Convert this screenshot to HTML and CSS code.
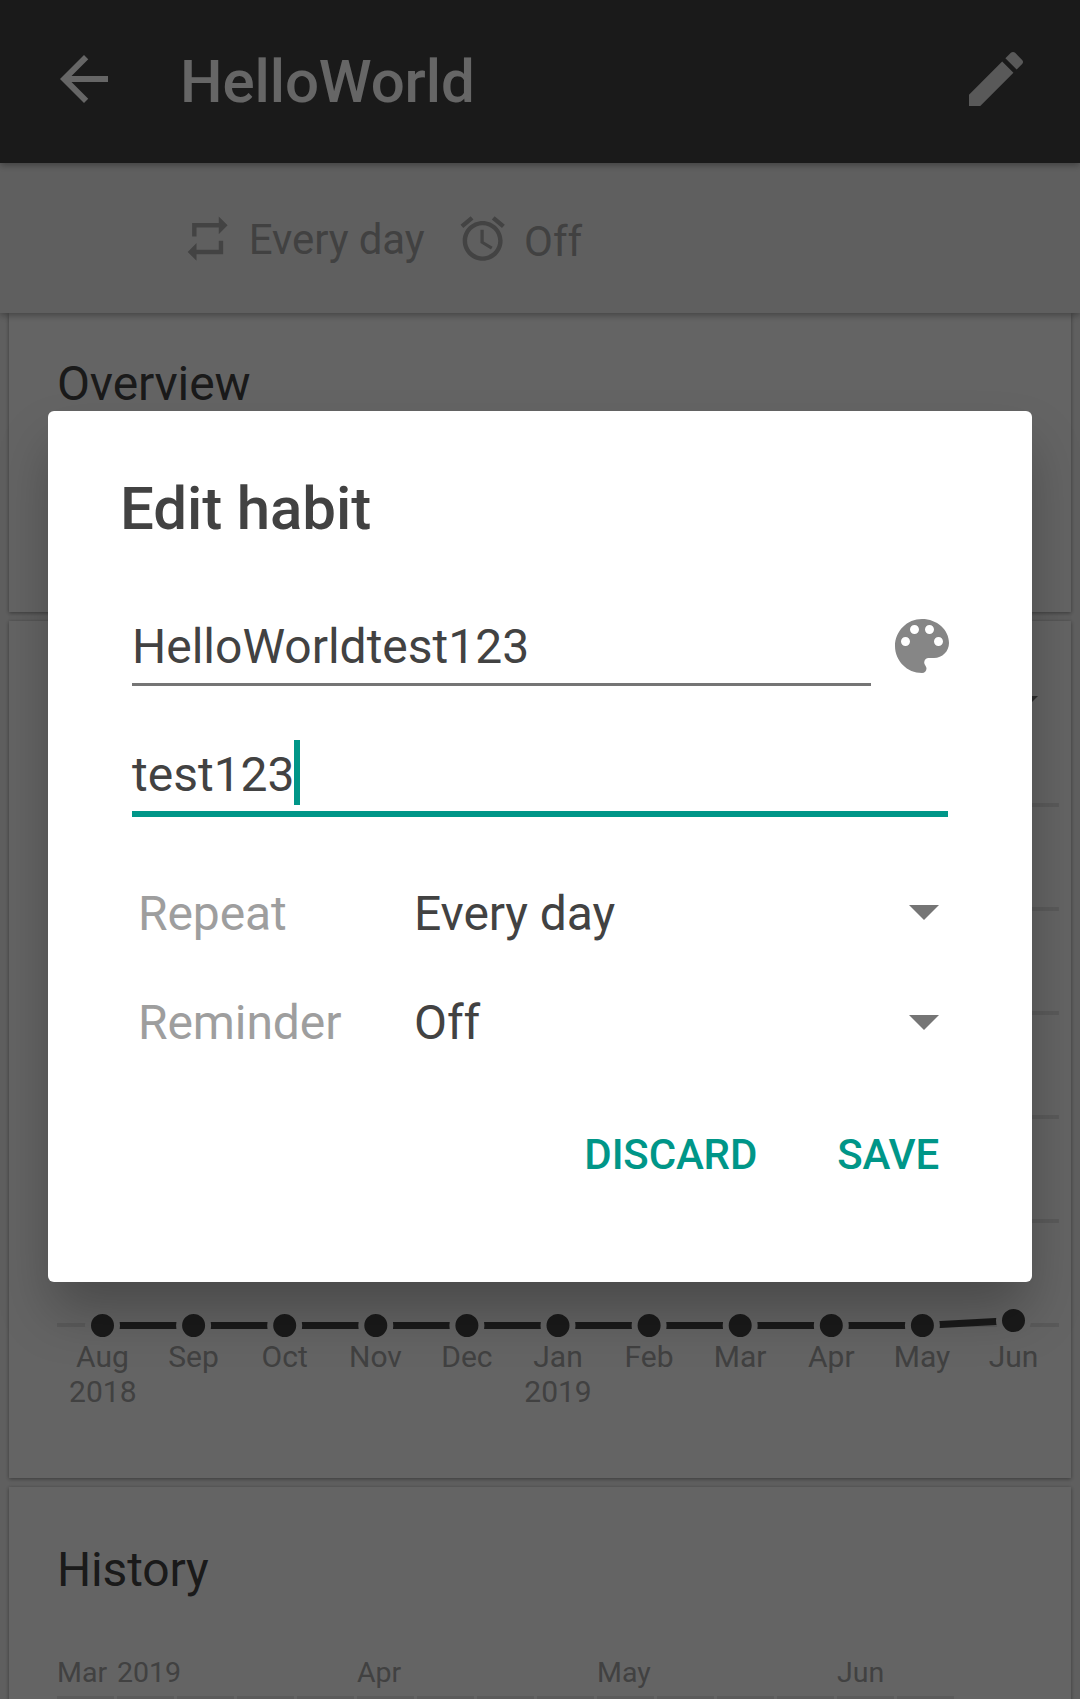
FILE: index.html
```html
<!DOCTYPE html>
<html lang="en">
<head>
<meta charset="utf-8">
<title>HelloWorld</title>
<link rel="stylesheet" href="styles.css">
</head>
<body>
<div class="screen">
  <header class="appbar">
    <svg class="icon back" viewBox="0 0 24 24"><path d="M20 11H7.83l5.59-5.59L12 4l-8 8 8 8 1.41-1.41L7.83 13H20v-2z"/></svg>
    <h1 class="appbar-title">HelloWorld</h1>
    <svg class="icon edit" viewBox="0 0 24 24"><path d="M3 17.25V21h3.75L17.81 9.94l-3.75-3.75L3 17.25zM20.71 7.04c.39-.39.39-1.02 0-1.41l-2.34-2.34c-.39-.39-1.02-.39-1.41 0l-1.83 1.83 3.75 3.75 1.83-1.83z"/></svg>
  </header>
  <div class="subheader">
    <svg class="small-icon" viewBox="0 0 24 24"><path d="M7 7h10v3l4-4-4-4v3H5v6h2V7zm10 10H7v-3l-4 4 4 4v-3h12v-6h-2v4z"/></svg>
    <span class="sub-repeat">Every day</span>
    <svg class="small-icon" viewBox="0 0 24 24"><path d="M22 5.72l-4.6-3.86-1.29 1.53 4.6 3.86L22 5.72zM7.88 3.39L6.6 1.86 2 5.71l1.29 1.53 4.59-3.85zM12.5 8H11v6l4.75 2.85.75-1.23-4-2.37V8zM12 4c-4.97 0-9 4.03-9 9s4.02 9 9 9c4.97 0 9-4.03 9-9s-4.03-9-9-9zm0 16c-3.87 0-7-3.13-7-7s3.13-7 7-7 7 3.13 7 7-3.13 7-7 7z"/></svg>
    <span class="sub-off">Off</span>
  </div>
  <main class="cards">
    <section class="card overview"><h2>Overview</h2></section>
    <section class="card score">
      <svg class="chart" viewBox="9 621 1062 857">
        <path class="spinner" d="M1008 696h30l-15 15z"/>
        <path class="grid" d="M57 805H1059M57 909H1059M57 1013H1059M57 1117H1059M57 1221H1059M57 1325H1059"/>
        <path class="line" d="M102.5 1325.5H922.4L1013.5 1320.5"/>
        <g class="dots">
          <circle cx="102.5" cy="1325.5" r="14.5"/><circle cx="193.6" cy="1325.5" r="14.5"/><circle cx="284.7" cy="1325.5" r="14.5"/><circle cx="375.8" cy="1325.5" r="14.5"/><circle cx="466.9" cy="1325.5" r="14.5"/><circle cx="558" cy="1325.5" r="14.5"/><circle cx="649.1" cy="1325.5" r="14.5"/><circle cx="740.2" cy="1325.5" r="14.5"/><circle cx="831.3" cy="1325.5" r="14.5"/><circle cx="922.4" cy="1325.5" r="14.5"/><circle cx="1013.5" cy="1320.5" r="14.5"/>
        </g>
        <g class="months">
          <text x="102.5" y="1367">Aug</text><text x="193.6" y="1367">Sep</text><text x="284.7" y="1367">Oct</text><text x="375.4" y="1367">Nov</text><text x="466.9" y="1367">Dec</text><text x="558" y="1367">Jan</text><text x="649.1" y="1367">Feb</text><text x="740.2" y="1367">Mar</text><text x="831.3" y="1367">Apr</text><text x="922" y="1367">May</text><text x="1013.5" y="1367">Jun</text>
          <text x="102.8" y="1402">2018</text><text x="558" y="1402">2019</text>
        </g>
      </svg>
    </section>
    <section class="card history">
      <h2>History</h2>
      <div class="weeks">
        <span>Mar</span><span>2019</span><span></span><span></span><span></span><span>Apr</span><span></span><span></span><span></span><span>May</span><span></span><span></span><span></span><span>Jun</span><span></span>
        <i></i><i></i><i></i><i></i><i></i><i></i><i></i><i></i><i></i><i></i><i></i><i></i><i></i><i></i><i></i>
      </div>
    </section>
  </main>
  <div class="scrim">
    <div class="dialog">
      <h2 class="dialog-title">Edit habit</h2>
      <div class="name-row">
        <div class="field name">HelloWorldtest123</div>
        <svg class="palette" viewBox="0 0 24 24"><path d="M12 3c-4.97 0-9 4.03-9 9s4.03 9 9 9c.83 0 1.5-.67 1.5-1.5 0-.39-.15-.74-.39-1.01-.23-.26-.38-.61-.38-.99 0-.83.67-1.5 1.5-1.5H16c2.76 0 5-2.24 5-5 0-4.42-4.03-8-9-8zm-5.5 9c-.83 0-1.5-.67-1.5-1.5S5.67 9 6.5 9 8 9.67 8 10.5 7.33 12 6.5 12zm3-4C8.67 8 8 7.33 8 6.5S8.67 5 9.5 5s1.5.67 1.5 1.5S10.33 8 9.5 8zm5 0c-.83 0-1.5-.67-1.5-1.5S13.67 5 14.5 5s1.5.67 1.5 1.5S15.33 8 14.5 8zm3 4c-.83 0-1.5-.67-1.5-1.5S16.67 9 17.5 9s1.5.67 1.5 1.5-.67 1.5-1.5 1.5z"/></svg>
      </div>
      <div class="field description"><span>test123</span><b class="caret"></b></div>
      <div class="option repeat"><span class="label">Repeat</span><span class="value">Every day</span><svg class="arrow" viewBox="0 0 30 15"><path d="M0 0h30L15 15z"/></svg></div>
      <div class="option"><span class="label">Reminder</span><span class="value">Off</span><svg class="arrow" viewBox="0 0 30 15"><path d="M0 0h30L15 15z"/></svg></div>
      <div class="actions"><span class="discard">DISCARD</span><span class="save">SAVE</span></div>
    </div>
  </div>
</div>
</body>
</html>
```
FILE: styles.css
```css
* { box-sizing: border-box; }
body {
  margin: 0;
  font-family: Roboto, "Liberation Sans", sans-serif;
  background: #eee;
}
h1, h2 { margin: 0; }
svg { display: block; flex: none; }

.screen {
  position: relative;
  height: 1699px;
  overflow: hidden;
  display: flex;
  flex-direction: column;
}

.appbar {
  position: relative;
  z-index: 2;
  flex: none;
  height: 163px;
  padding: 0 48px;
  display: flex;
  align-items: center;
  background: #424242;
  box-shadow: 0 2px 7px rgba(0, 0, 0, .35);
}
.icon { width: 72px; height: 72px; margin-bottom: 5px; fill: #fff; }
.edit { margin-left: auto; fill: #dedede; }
.appbar-title {
  margin-left: 60px;
  font-size: 60px;
  line-height: 70px;
  font-weight: 500;
  letter-spacing: -.1px;
  color: #fff;
}

.subheader {
  position: relative;
  z-index: 1;
  flex: none;
  height: 150px;
  padding-left: 180.5px;
  display: flex;
  align-items: center;
  background: #eee;
  box-shadow: 0 2px 7px rgba(0, 0, 0, .35);
  font-size: 42px;
  line-height: 50px;
  color: #a2a2a2;
}
.small-icon { width: 53.3px; height: 53.3px; margin-top: 1px; fill: #a8a8a8; }
.sub-repeat { width: 207px; padding: 4px 0 0 15px; margin-right: 15px; letter-spacing: -.1px; }
.sub-off { padding: 8px 0 0 15px; }

.cards {
  flex: none;
  padding: 0 9px;
  display: flex;
  flex-direction: column;
  gap: 9px;
}
.card { background: #fafafa; box-shadow: 0 1px 4px rgba(0, 0, 0, .4); }
.card h2 {
  padding-left: 48px;
  font-size: 48px;
  line-height: 56px;
  font-weight: 400;
  letter-spacing: -.15px;
  color: #424242;
}
.overview { height: 299px; padding-top: 43px; }
.score { height: 857px; }
.history { height: 240px; padding-top: 55px; }

.chart { width: 1062px; height: 857px; }
.spinner { fill: #6e6e6e; }
.grid { stroke: #e0e0e0; stroke-width: 4; }
.line { stroke: #424242; stroke-width: 7; fill: none; }
.dots { fill: #424242; stroke: #fafafa; stroke-width: 6; }
.months { font-size: 30px; fill: #a2a2a2; text-anchor: middle; }

.weeks {
  display: grid;
  grid-template-columns: repeat(15, 57px);
  column-gap: 3px;
  margin: 55px 0 0 48px;
  font-size: 28.5px;
  line-height: 40px;
  color: #a2a2a2;
}
.weeks i { height: 57px; margin-top: 3px; background: #e3e3e3; }

.scrim {
  position: absolute;
  inset: 0;
  z-index: 3;
  padding: 411px 48px 0;
  background: rgba(0, 0, 0, .6);
}
.dialog {
  height: 871px;
  padding: 63px 72px 0;
  border-radius: 6px;
  background: #fff;
  box-shadow: 0 32px 54px -4px rgba(0, 0, 0, .27);
  font-size: 48px;
  color: #424242;
}
.dialog-title { font-size: 60px; line-height: 70px; font-weight: 500; letter-spacing: -.1px; }
.name-row { display: flex; gap: 15px; margin: 66px 0 0 12px; }
.palette { width: 72px; height: 72px; fill: #868686; }
.field { line-height: 57px; }
.name { width: 739px; height: 76px; padding-top: 8px; border-bottom: 3px solid #757575; }
.description {
  display: flex;
  width: 816px;
  height: 77px;
  margin: 54px 0 0 12px;
  border-bottom: 6px solid #009688;
}
.description span { width: 162px; padding-top: 6px; }
.caret { width: 6px; height: 65px; background: #009688; }
.option {
  display: flex;
  align-items: center;
  height: 110px;
  padding: 0 21px 0 18px;
  line-height: 56px;
  letter-spacing: -.1px;
}
.repeat { margin-top: 41px; }
.repeat span { padding-top: 2px; }
.label { width: 276px; color: #9e9e9e; }
.arrow { width: 30px; height: 15px; margin: 0 0 2px auto; fill: #757575; }
.actions {
  display: flex;
  align-items: center;
  justify-content: flex-end;
  height: 153px;
  padding-right: 21px;
  gap: 80px;
  font-size: 42px;
  font-weight: 500;
  letter-spacing: -.15px;
  color: #009688;
}
```
